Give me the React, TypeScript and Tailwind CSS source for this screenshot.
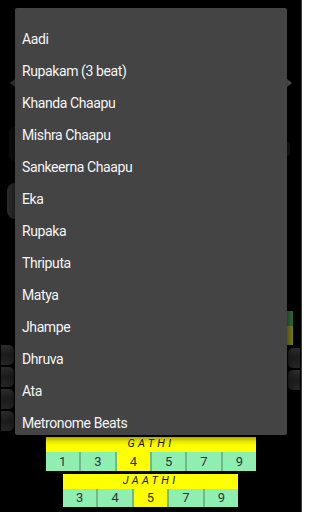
import React from "react";

const talas = [
  "Aadi",
  "Rupakam (3 beat)",
  "Khanda Chaapu",
  "Mishra Chaapu",
  "Sankeerna Chaapu",
  "Eka",
  "Rupaka",
  "Thriputa",
  "Matya",
  "Jhampe",
  "Dhruva",
  "Ata",
  "Metronome Beats",
];

const gathi = [1, 3, 4, 5, 7, 9];
const jaathi = [3, 4, 5, 7, 9];

function DimButton({ side }: { side: "left" | "right" }) {
  return (
    <div
      className={
        "h-[22px] border border-black bg-gradient-to-b from-[#2c2c2c] via-[#1c1c1c] to-[#262626] " +
        (side === "left" ? "rounded-r-md" : "rounded-l-md")
      }
    />
  );
}

function NumberBar({
  label,
  values,
  selected,
  rowHeight,
}: {
  label: string;
  values: number[];
  selected: number;
  rowHeight: string;
}) {
  return (
    <div className="flex flex-col">
      <div className="flex h-[15px] items-center justify-center bg-[#ffff00] text-[11px] italic tracking-[0.3em] text-[#111]">
        {label}
      </div>
      <div className={"flex " + rowHeight}>
        {values.map((v, i) => (
          <div
            key={v}
            className={
              "flex flex-1 items-center justify-center text-[13px] text-[#333] " +
              (v === selected ? "bg-[#ffff00] " : "bg-[#8eefb1] ") +
              (i > 0 ? "border-l-2 border-[#6fb98c]" : "")
            }
          >
            {v}
          </div>
        ))}
      </div>
    </div>
  );
}

export default function App() {
  return (
    <div
      className="relative flex h-[512px] w-[302px] flex-col overflow-hidden border-r border-[#3c3c3c] bg-black"
      style={{ fontFamily: "Roboto, 'Liberation Sans', sans-serif" }}
    >
      {/* dimmed screen behind the popup */}
      <div className="flex h-[437px] shrink-0 flex-row justify-between">
        <div className="flex w-[15px] flex-col">
          <div className="mt-[79px] ml-[10px] h-0 w-0 border-y-[4px] border-r-[5px] border-y-transparent border-r-[#3a3a3a]" />
          <div className="mt-[40px] ml-[9px] h-[34px] w-[10px] rounded-md bg-[#0d0d0d]" />
          <div className="mt-[22px] ml-[7px] h-[36px] w-[16px] rounded-full bg-[#2a2a2a]" />
          <div className="mt-[125px] flex flex-col">
            <DimButton side="left" />
            <DimButton side="left" />
            <DimButton side="left" />
            <DimButton side="left" />
          </div>
        </div>
        <div className="flex w-[14px] flex-col">
          <div className="mt-[79px] h-0 w-0 border-y-[4px] border-l-[5px] border-y-transparent border-l-[#5a5a5a]" />
          <div className="mt-[55px] h-[14px] w-[3px] rounded-r-full bg-[#151515]" />
          <div className="mt-[155px] h-[15px] w-[6px] bg-[#2f6b3c]" />
          <div className="h-[19px] w-[6px] bg-[#7d7d10]" />
          <div className="mt-[2px] flex flex-col">
            <DimButton side="right" />
            <DimButton side="right" />
          </div>
        </div>
      </div>

      {/* gathi / jaathi */}
      <div className="ml-[46px] w-[210px]">
        <NumberBar label="GATHI" values={gathi} selected={4} rowHeight="h-[19px]" />
      </div>
      <div className="mt-[3px] ml-[63px] w-[175px]">
        <NumberBar label="JAATHI" values={jaathi} selected={5} rowHeight="h-[18px]" />
      </div>

      {/* spinner popup */}
      <div className="absolute top-[8px] left-[15px] h-[427px] w-[272px] overflow-hidden rounded-[2px] bg-[#444444] pt-[15px] shadow-[0_2px_8px_rgba(0,0,0,0.7)]">
        {talas.map((t) => (
          <div
            key={t}
            className="flex h-[32px] items-center px-[7px] text-[14px] tracking-[-0.4px] text-[#f4f4f4]"
          >
            {t}
          </div>
        ))}
      </div>
    </div>
  );
}
